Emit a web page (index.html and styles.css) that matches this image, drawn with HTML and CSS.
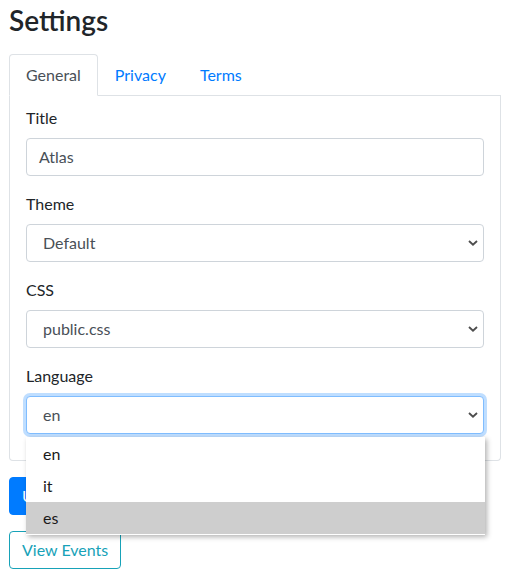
FILE: index.html
```html
<!DOCTYPE html>
<html lang="en">
<head>
<meta charset="utf-8">
<title>Settings</title>
<link rel="stylesheet" href="styles.css">
</head>
<body>
<div class="page">
  <h2 class="title">Settings</h2>
  <ul class="tabs">
    <li class="tab active">General</li>
    <li class="tab">Privacy</li>
    <li class="tab">Terms</li>
  </ul>
  <div class="panel">
    <div class="group">
      <label class="label">Title</label>
      <div class="input">Atlas</div>
    </div>
    <div class="group">
      <label class="label">Theme</label>
      <div class="select"><span class="value">Default</span><svg class="chev" width="10" height="6" viewBox="0 0 10 6"><path d="M1 1 L5 4.6 L9 1" fill="none" stroke="#4d4d4d" stroke-width="1.9"/></svg></div>
    </div>
    <div class="group">
      <label class="label">CSS</label>
      <div class="select"><span class="value">public.css</span><svg class="chev" width="10" height="6" viewBox="0 0 10 6"><path d="M1 1 L5 4.6 L9 1" fill="none" stroke="#4d4d4d" stroke-width="1.9"/></svg></div>
    </div>
    <div class="group">
      <label class="label">Language</label>
      <div class="select-wrap">
        <div class="select focus"><span class="value">en</span><svg class="chev" width="10" height="6" viewBox="0 0 10 6"><path d="M1 1 L5 4.6 L9 1" fill="none" stroke="#4d4d4d" stroke-width="1.9"/></svg></div>
        <div class="popup">
          <div class="opt">en</div>
          <div class="opt">it</div>
          <div class="opt hl">es</div>
        </div>
      </div>
    </div>
  </div>
  <div class="actions">
    <button class="btn primary">Update</button>
    <button class="btn outline">View Events</button>
  </div>
</div>
</body>
</html>
```
FILE: styles.css
```css
* { box-sizing: border-box; }
html, body { margin: 0; padding: 0; background: #fff; }
body {
  font-family: Lato, "Open Sans", sans-serif;
  font-size: 16px;
  line-height: 24px;
  color: #212529;
}
.page {
  padding: 6px 13px 0 9px;
}
.title {
  margin: 0 0 20px 0;
  font-size: 28px;
  line-height: 28px;
  font-weight: 600;
  color: #212529;
}
.tabs {
  list-style: none;
  margin: 0;
  padding: 0;
  display: flex;
  border-bottom: 1px solid #dee2e6;
}
.tab {
  padding: 8px 16px;
  border: 1px solid transparent;
  border-radius: 4px 4px 0 0;
  margin-bottom: -1px;
  color: #007bff;
}
.tab.active {
  color: #495057;
  background: #fff;
  border-color: #dee2e6 #dee2e6 #fff;
}
.panel {
  border: 1px solid #dee2e6;
  border-top: none;
  border-radius: 0 0 4px 4px;
  padding: 10px 16px 10px 16px;
}
.group {
  margin-bottom: 16px;
}
.label {
  display: block;
  margin-bottom: 8px;
}
.input, .select {
  height: 38px;
  border: 1px solid #ced4da;
  border-radius: 4px;
  color: #495057;
  background: #fff;
}
.input {
  padding: 6px 12px;
}
.select {
  display: flex;
  align-items: center;
  justify-content: space-between;
  padding: 6px 5px 6px 16px;
}
.chev { display: block; }
.select.focus {
  border-color: #80bdff;
  box-shadow: 0 0 0 3px rgba(0, 123, 255, 0.25);
}
.select-wrap {
  position: relative;
}
.popup {
  position: absolute;
  left: 0;
  top: calc(100% + 3px);
  width: 459px;
  padding: 1px 0;
  background: #fff;
  box-shadow: 2px 2px 5px rgba(0, 0, 0, 0.3);
  z-index: 5;
}
.opt {
  height: 32px;
  line-height: 32px;
  padding-left: 17px;
  color: #1a1a1a;
}
.opt.hl {
  background: #cecece;
}
.actions {
  display: flex;
  flex-direction: column;
  align-items: flex-start;
  gap: 16px;
  padding-top: 16px;
}
.btn {
  font-family: inherit;
  font-size: 16px;
  line-height: 24px;
  padding: 6px 12px;
  border-radius: 4px;
  border: 1px solid transparent;
  background: #fff;
}
.btn.primary {
  background: #007bff;
  border-color: #007bff;
  color: #fff;
}
.btn.outline {
  color: #17a2b8;
  border-color: #17a2b8;
}
```
